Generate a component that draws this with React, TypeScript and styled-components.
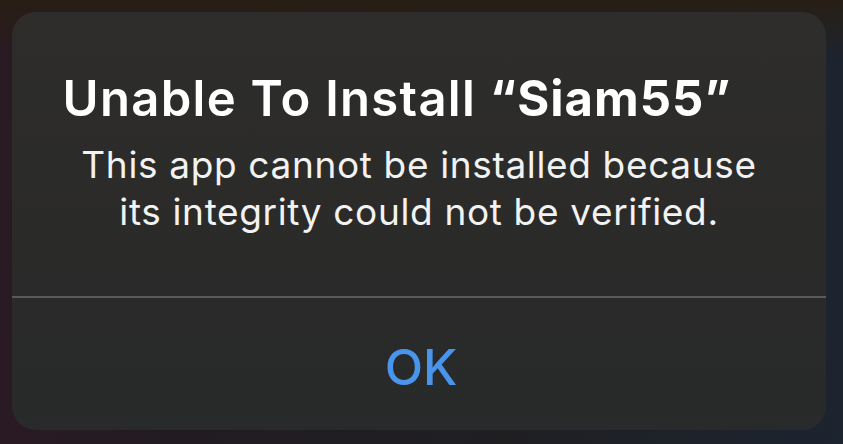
import React from "react";
import styled, { createGlobalStyle } from "styled-components";

const Global = createGlobalStyle`
  html, body { margin: 0; padding: 0; }
  body {
    width: 843px;
    height: 444px;
    overflow: hidden;
    background: #1a1b20;
  }
`;

const Backdrop = styled.div`
  width: 843px;
  height: 444px;
  box-sizing: border-box;
  padding: 12px 17px 14px 12px;
  background:
    linear-gradient(180deg, rgba(40, 30, 18, 0.9) 0%, rgba(30, 28, 26, 0) 14%),
    linear-gradient(90deg, #2a1a24 0%, #221c22 20%, #1f1f22 60%, #1c2430 100%);
  display: flex;
`;

const Card = styled.div`
  flex: 1;
  border-radius: 24px;
  background: linear-gradient(180deg, #2e2d2b 0%, #2a2a29 60%, #282a2b 100%);
  display: flex;
  flex-direction: column;
  overflow: hidden;
`;

const Content = styled.div`
  height: 286px;
  box-sizing: border-box;
  padding-top: 59px;
  display: flex;
  flex-direction: column;
  align-items: center;
  border-bottom: 2px solid #5a5a5a;
`;

const Title = styled.h1`
  margin: 0 44px 0 0;
  font-family: Inter, "Noto Sans", sans-serif;
  font-weight: 600;
  font-size: 49px;
  line-height: 56px;
  color: #ffffff;
  white-space: nowrap;
  letter-spacing: 1.3px;
`;

const AppName = styled.span`
  font-weight: 700;
  letter-spacing: 1px;
`;

const Message = styled.p`
  margin: 14px 0 0;
  font-family: Inter, "Noto Sans", sans-serif;
  font-weight: 400;
  font-size: 37px;
  line-height: 47px;
  color: #f2f2f2;
  text-align: center;
  letter-spacing: 0.65px;
`;

const ButtonRow = styled.div`
  flex: 1;
  display: flex;
  align-items: center;
  justify-content: center;
  padding: 6px 0 0 4px;
`;

const OkButton = styled.button`
  background: none;
  border: none;
  padding: 0;
  font-family: Inter, "Noto Sans", sans-serif;
  font-weight: 500;
  font-size: 50px;
  color: #4a95ec;
  cursor: pointer;
`;

export default function App() {
  return (
    <>
      <Global />
      <Backdrop>
        <Card>
          <Content>
            <Title>
              Unable To Install <AppName>“Siam55”</AppName>
            </Title>
            <Message>
              This app cannot be installed because
              <br />
              its integrity could not be verified.
            </Message>
          </Content>
          <ButtonRow>
            <OkButton>OK</OkButton>
          </ButtonRow>
        </Card>
      </Backdrop>
    </>
  );
}
